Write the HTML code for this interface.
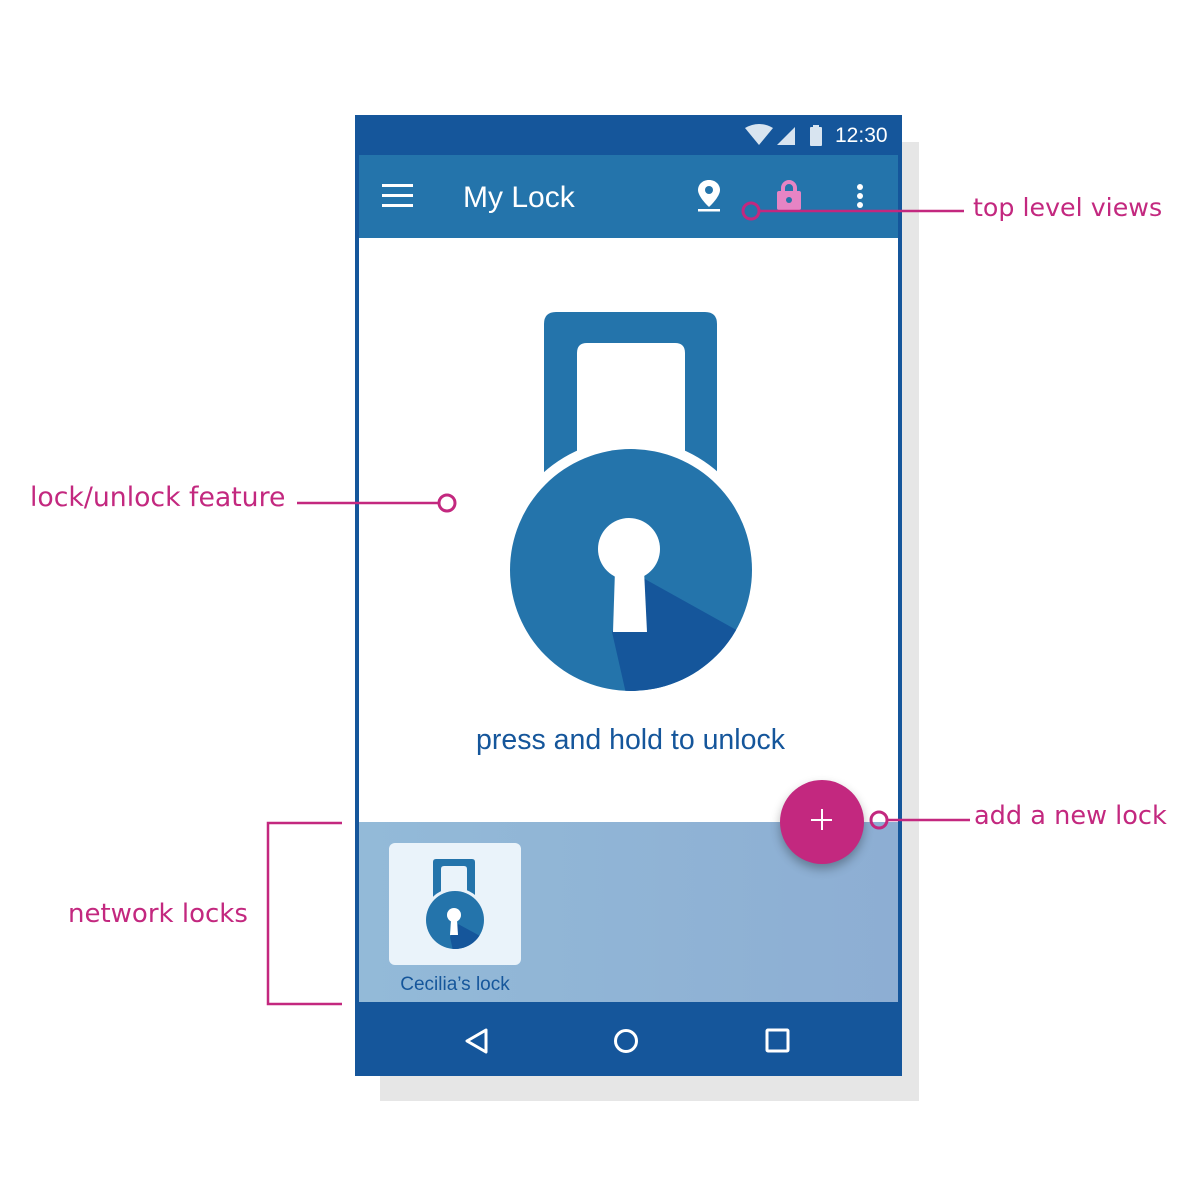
<!DOCTYPE html>
<html><head><meta charset="utf-8"><style>
html,body{margin:0;padding:0;background:#fff;}
body{width:1200px;height:1200px;position:relative;overflow:hidden;font-family:"Liberation Sans",sans-serif;}
.abs{position:absolute;}
.lbl{position:absolute;color:#c3287f;font-family:"DejaVu Sans","Liberation Sans",sans-serif;white-space:nowrap;}
</style></head><body>
<div class="abs" style="left:380px;top:142px;width:539px;height:959px;background:#e6e6e6"></div>
<div class="abs" style="left:355px;top:115px;width:547px;height:961px;background:#15569b"></div>
<div class="abs" style="left:359px;top:155px;width:539px;height:83px;background:#2474ab"></div>
<div class="abs" style="left:359px;top:238px;width:539px;height:584px;background:#fff"></div>
<div class="abs" style="left:359px;top:822px;width:539px;height:180px;background:linear-gradient(90deg,#93bad8,#8daed3)"></div>

<svg class="abs" style="left:740px;top:122px" width="90" height="26">
<path d="M5 6 Q19 -2 33 6 L19 23 Z" fill="#d8e4f0"/>
<path d="M37 23 L55 5 L55 23 Z" fill="#d8e4f0"/>
<rect x="70" y="5" width="12" height="19" rx="1" fill="#d8e4f0"/><rect x="73" y="3" width="6" height="3" fill="#d8e4f0"/>
</svg>
<div class="abs" style="left:835px;top:124px;color:#fff;font-size:21px;">12:30</div>

<div class="abs" style="left:382px;top:184px;width:31px;height:3px;background:#fff"></div>
<div class="abs" style="left:382px;top:194px;width:31px;height:3px;background:#fff"></div>
<div class="abs" style="left:382px;top:204px;width:31px;height:3px;background:#fff"></div>
<div class="abs" style="left:463px;top:181px;color:#fff;font-size:30px;">My Lock</div>
<svg class="abs" style="left:694px;top:178px" width="30" height="36">
<path d="M15 2 C8 2 4 7 4 12 C4 19 15 29 15 29 C15 29 26 19 26 12 C26 7 22 2 15 2 Z" fill="#fff"/>
<circle cx="15" cy="12" r="4" fill="#2474ab"/>
<rect x="4" y="31" width="22" height="2.5" fill="#fff"/>
</svg>
<svg class="abs" style="left:774px;top:178px" width="30" height="34">
<path d="M9 14 V10 A6 6 0 0 1 21 10 V14" stroke="#e684c4" stroke-width="4" fill="none"/>
<rect x="3" y="13" width="24" height="19" rx="2" fill="#e684c4"/>
<circle cx="15" cy="22" r="3" fill="#2474ab"/>
</svg>
<div class="abs" style="left:857px;top:184px;width:6px;height:6px;border-radius:50%;background:#fff"></div>
<div class="abs" style="left:857px;top:193px;width:6px;height:6px;border-radius:50%;background:#fff"></div>
<div class="abs" style="left:857px;top:202px;width:6px;height:6px;border-radius:50%;background:#fff"></div>

<svg class="abs" style="left:0;top:0" width="1200" height="1200">
<defs><clipPath id="c1"><circle cx="631" cy="570" r="121"/></clipPath></defs>
<path d="M544 490 V324 Q544 312 556 312 H705 Q717 312 717 324 V490 Z M577 490 H685 V353 Q685 343 675 343 H587 Q577 343 577 353 Z" fill="#2474ab" fill-rule="evenodd"/>
<circle cx="631" cy="570" r="131" fill="#fff"/>
<circle cx="631" cy="570" r="121" fill="#2474ab"/>
<path d="M643 578 L740 632 L740 720 L632 720 L612 632 Z" fill="#15569b" clip-path="url(#c1)"/>
<circle cx="629" cy="549" r="31" fill="#fff"/>
<path d="M615 570 H644 L647 632 H613 Z" fill="#fff"/>
<g stroke="#c3287f" stroke-width="2.5" fill="none">
<line x1="760" y1="211" x2="964" y2="211"/><circle cx="751" cy="211" r="8" stroke-width="3"/>
<line x1="297" y1="503" x2="438" y2="503"/><circle cx="447" cy="503" r="8" stroke-width="3"/>
<line x1="888" y1="820" x2="970" y2="820"/><circle cx="879" cy="820" r="8" stroke-width="3"/>
<path d="M342 823 H268 V1004 H342"/>
</g>
</svg>
<div class="abs" style="left:359px;top:724px;width:543px;text-align:center;color:#15569b;font-size:28.5px;">press and hold to unlock</div>

<div class="abs" style="left:780px;top:780px;width:84px;height:84px;border-radius:50%;background:#c3287f;box-shadow:0 5px 10px rgba(0,0,0,0.3)"></div>
<div class="abs" style="left:811px;top:819px;width:21px;height:2px;background:#fff"></div>
<div class="abs" style="left:821px;top:809px;width:2px;height:21px;background:#fff"></div>

<div class="abs" style="left:389px;top:843px;width:132px;height:122px;border-radius:6px;background:#eaf3fa"></div>
<svg class="abs" style="left:0;top:0" width="1200" height="1200">
<defs><clipPath id="c2"><circle cx="455" cy="920" r="29"/></clipPath></defs>
<path d="M433 905 V862 Q433 859 436 859 H472 Q475 859 475 862 V905 Z M441 905 H467 V869 Q467 866 464 866 H444 Q441 866 441 869 Z" fill="#2474ab" fill-rule="evenodd"/>
<circle cx="455" cy="920" r="32" fill="#eaf3fa"/>
<circle cx="455" cy="920" r="29" fill="#2474ab"/>
<path d="M458 924 L482 937 L482 960 L455 960 L450 937 Z" fill="#15569b" clip-path="url(#c2)"/>
<circle cx="454" cy="915" r="7" fill="#fff"/>
<path d="M451 920 H457 L458 935 H450 Z" fill="#fff"/>
</svg>
<div class="abs" style="left:389px;top:974px;width:132px;text-align:center;color:#15569b;font-size:19px;">Cecilia’s lock</div>

<svg class="abs" style="left:0;top:0" width="1200" height="1200">
<g stroke="#fff" stroke-width="3" fill="none" stroke-linejoin="round">
<path d="M486 1030 L467 1041 L486 1052 Z"/>
<circle cx="626" cy="1041" r="10.5"/>
<rect x="767" y="1030" width="21" height="21" rx="1"/>
</g>
</svg>

<div class="lbl" style="left:973px;top:193px;font-size:25.3px;">top level views</div>
<div class="lbl" style="left:30px;top:482px;font-size:26.7px;">lock/unlock feature</div>
<div class="lbl" style="left:974px;top:801px;font-size:25.6px;">add a new lock</div>
<div class="lbl" style="left:68px;top:899px;font-size:26px;">network locks</div>
</body></html>
